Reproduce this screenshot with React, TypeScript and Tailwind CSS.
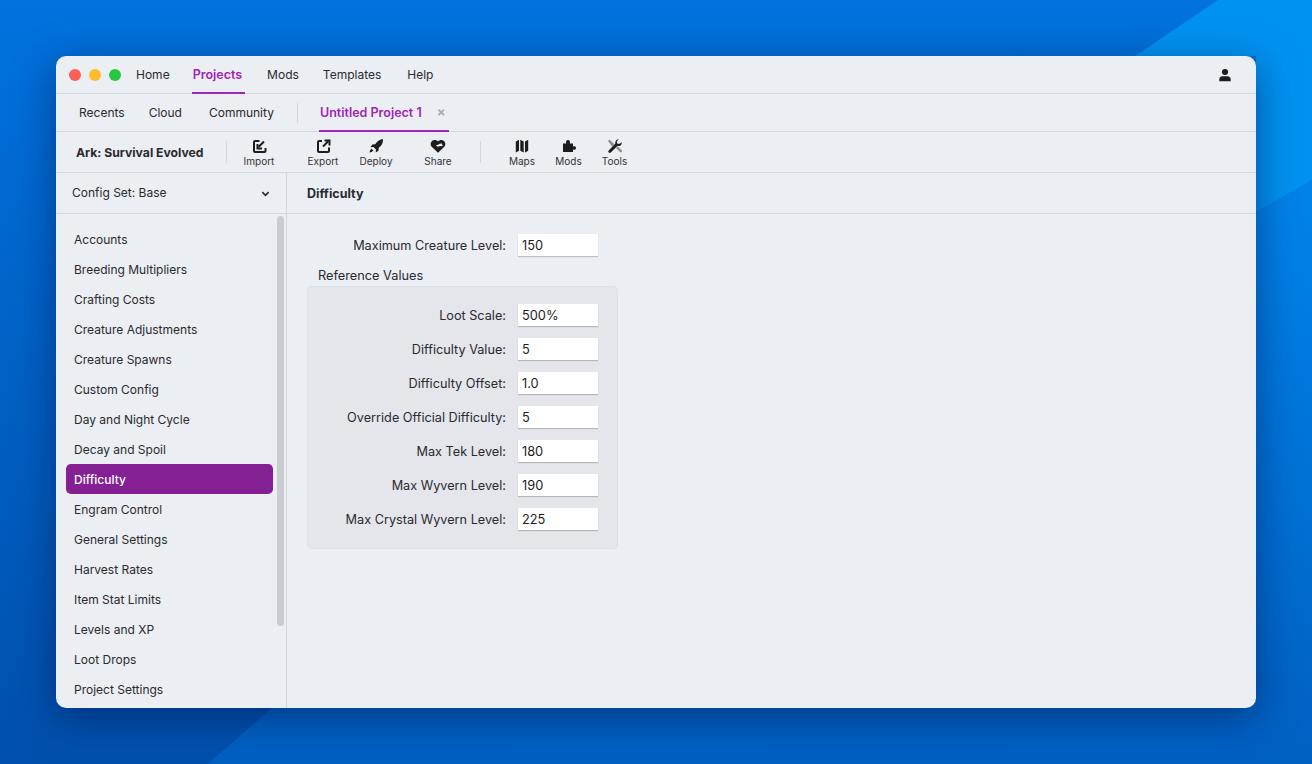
import * as React from 'react'

const sidebarItems = [
  'Accounts',
  'Breeding Multipliers',
  'Crafting Costs',
  'Creature Adjustments',
  'Creature Spawns',
  'Custom Config',
  'Day and Night Cycle',
  'Decay and Spoil',
  'Difficulty',
  'Engram Control',
  'General Settings',
  'Harvest Rates',
  'Item Stat Limits',
  'Levels and XP',
  'Loot Drops',
  'Project Settings',
]

const referenceValues = [
  ['Loot Scale:', '500%'],
  ['Difficulty Value:', '5'],
  ['Difficulty Offset:', '1.0'],
  ['Override Official Difficulty:', '5'],
  ['Max Tek Level:', '180'],
  ['Max Wyvern Level:', '190'],
  ['Max Crystal Wyvern Level:', '225'],
]

function Icon({ children }: { children: React.ReactNode }) {
  return (
    <svg viewBox="0 0 16 16" className="h-4 w-4 text-[#1d1d20]" fill="currentColor">
      {children}
    </svg>
  )
}

const ImportIcon = () => (
  <Icon>
    <g fill="none" stroke="currentColor" strokeWidth="2">
      <path d="M8.500 3H4a1 1 0 0 0-1 1v9a1 1 0 0 0 1 1h9.500a1 1 0 0 0 1-1v-3" />
      <path d="M13 3.500 7.500 9" />
      <path d="M6.500 6v4.500H11" />
    </g>
  </Icon>
)

const ExportIcon = () => (
  <Icon>
    <g fill="none" stroke="currentColor" strokeWidth="2">
      <path d="M7 3H4a1 1 0 0 0-1 1v9a1 1 0 0 0 1 1h9a1 1 0 0 0 1-1V9.500" />
      <path d="M8 8.500 13.500 3" />
      <path d="M9.500 2.500H14.500v5" />
    </g>
  </Icon>
)

const DeployIcon = () => (
  <Icon>
    <path d="M15 1c.2 3.700-1.100 6.500-4.200 8.800l-.3 3-2.800 1.700.3-3-2.500-2.500-3 .3 1.700-2.800 3-.3C9.500 3 12 1.300 15 1z" />
    <path d="M3.500 10.700l1.800 1.800c-.7 1.100-2.100 1.800-3.800 2 .2-1.700.9-3.100 2-3.800z" />
  </Icon>
)

const ShareIcon = () => (
  <Icon>
    <path
      fillRule="evenodd"
      d="M8 14.800 1.700 8.700C-.3 6.700.6 2.600 4.200 2.100 5.700 1.900 7 2.500 8 3.500c1-1 2.300-1.600 3.800-1.400 3.600.5 4.500 4.600 2.500 6.600zM11.800 5.500c-1.200-.3-2.400.1-3.100 1L6 7.300l1.500 1.500 2.800-.8 2.400.2z"
    />
  </Icon>
)

const MapsIcon = () => (
  <Icon>
    <path d="M1.800 3.500 5 1.800v11l-3.200 1.700zM6.300 1.800l3.400 1.700v11l-3.400-1.700zM11 3.500l3.200-1.700v11L11 14.500z" />
  </Icon>
)

const ModsIcon = () => (
  <Icon>
    <path d="M2 5.500h3.200C4.600 3.600 5.300 2 7 2s2.400 1.600 1.800 3.500H12v3c1.500-.6 3-.1 3 1.500s-1.500 2.100-3 1.500V14H2z" />
  </Icon>
)

const ToolsIcon = () => (
  <Icon>
    <path fill="#8b8d92" d="M2.300 1.500 7.200 6 6 7.800 5 8.500 1 3z" />
    <path fill="#8b8d92" d="M9 10l1.700-1.700 4 4c.5.500.5 1.200 0 1.700s-1.200.5-1.700 0z" />
    <path d="M14.700 4.300c.4 1.800-.8 3.700-2.800 3.700-.5 0-.9-.1-1.300-.2l-6.800 6.700c-.6.600-1.600.6-2.100 0s-.6-1.500 0-2.100l6.700-6.800C7.900 3.500 9.600 1.100 11.800 1.300l-2 2.200.4 2 2 .5z" />
  </Icon>
)

const tools = [
  { label: 'Import', icon: <ImportIcon />, width: 'w-[62px]' },
  { label: 'Export', icon: <ExportIcon />, width: 'w-[66px]' },
  { label: 'Deploy', icon: <DeployIcon />, width: 'w-[40px]' },
  { label: 'Share', icon: <ShareIcon />, width: 'w-[84px]' },
]

const tools2 = [
  { label: 'Maps', icon: <MapsIcon />, width: 'w-[46px]' },
  { label: 'Mods', icon: <ModsIcon />, width: 'w-[47px]' },
  { label: 'Tools', icon: <ToolsIcon />, width: 'w-[45px]' },
]

function ToolButton({ label, icon, width }: { label: string; icon: React.ReactNode; width: string }) {
  return (
    <div className={`flex h-[36px] flex-col items-center pt-[4px] ${width}`}>
      {icon}
      <span className="-mt-px whitespace-nowrap text-[10px] leading-[16px] text-[#333337]">{label}</span>
    </div>
  )
}

function Field({ label, value }: { label: string; value: string }) {
  return (
    <div className="flex h-[22px] items-center justify-end">
      <span className="mr-3 whitespace-nowrap pt-px text-[12.7px] text-[#2a2a2e]">{label}</span>
      <div className="flex h-[22px] w-20 items-center bg-white pl-1 pt-px text-[12.8px] text-[#1d1d20] shadow-[0_1px_1px_rgba(0,0,0,0.2)]">
        {value}
      </div>
    </div>
  )
}

export default function App() {
  return (
    <div className="relative flex h-[764px] w-[1312px] overflow-hidden bg-gradient-to-b from-[#0172de] to-[#0050ac] p-14 font-['Inter',sans-serif] antialiased">
      <svg viewBox="0 0 1312 764" className="absolute inset-0 h-full w-full">
        <defs>
          <linearGradient id="lower" x1="0" y1="180" x2="0" y2="764" gradientUnits="userSpaceOnUse">
            <stop offset="0" stopColor="#0084ea" />
            <stop offset="1" stopColor="#0060c2" />
          </linearGradient>
        </defs>
        <path d="M1312 180 L1256 212 C900 400 500 500 272 708 L208 764 L1312 764 Z" fill="url(#lower)" />
        <polygon points="1218,0 1312,0 1312,180 1256,212 1256,56 1135,56" fill="#0092f0" />
      </svg>
      <div className="relative flex h-[652px] w-[1200px] flex-col overflow-hidden rounded-[10px] bg-[#ebeef3] shadow-[0_10px_40px_rgba(0,15,70,0.5)]">
        {/* top nav */}
        <div className="flex h-[38px] shrink-0 items-center border-b border-[#d3d6db] pl-[13px] pr-[24px] text-[12px] text-[#2a2a2e]">
          <div className="flex items-center gap-2">
            <span className="h-3 w-3 rounded-full bg-[#fe5f57]" />
            <span className="h-3 w-3 rounded-full bg-[#febb2e]" />
            <span className="h-3 w-3 rounded-full bg-[#28c73f]" />
          </div>
          <span className="ml-[15px]">Home</span>
          <span className="relative ml-[23px] flex h-full items-center pt-[2px] text-[12.5px] font-semibold text-[#a024b4]">
            Projects
            <span className="absolute -bottom-px -left-[1px] -right-[3px] h-[2px] bg-[#a024b4]" />
          </span>
          <span className="ml-[25px]">Mods</span>
          <span className="ml-[24px]">Templates</span>
          <span className="ml-[26px]">Help</span>
          <svg viewBox="0 0 16 16" className="ml-auto h-[14px] w-[14px] text-[#1d1d20]" fill="currentColor">
            <circle cx="8" cy="4.500" r="3.500" />
            <path d="M1.500 15v-2c0-2 1.500-3.500 3.500-3.500h6c2 0 3.500 1.500 3.500 3.500v2z" />
          </svg>
        </div>

        {/* tabs */}
        <div className="flex h-[38px] shrink-0 items-center border-b border-[#d3d6db] pl-[23px] text-[12px] text-[#2a2a2e]">
          <span>Recents</span>
          <span className="ml-[24px]">Cloud</span>
          <span className="ml-[27px]">Community</span>
          <span className="ml-[23px] h-[20px] w-px bg-[#d3d6db]" />
          <span className="relative ml-[22px] flex h-full items-center pt-[2px] text-[12.5px] font-semibold text-[#a024b4]">
            Untitled Project 1
            <span className="absolute -bottom-px -left-[1px] -right-[27px] h-[2px] bg-[#a024b4]" />
          </span>
          <span className="ml-[15px] text-[13px] font-bold leading-none text-[#a9abb0]">×</span>
        </div>

        {/* toolbar */}
        <div className="flex h-[41px] shrink-0 items-center border-b border-[#d3d6db] pl-5">
          <span className="w-[150px] whitespace-nowrap pt-[2px] text-[12.2px] font-bold text-[#2a2a2e]">
            Ark: Survival Evolved
          </span>
          <span className="h-[22px] w-px bg-[#d3d6db]" />
          <div className="ml-px flex items-center">
            {tools.map((tool) => (
              <ToolButton key={tool.label} {...tool} />
            ))}
          </div>
          <span className="h-[22px] w-px bg-[#d3d6db]" />
          <div className="ml-[18px] flex items-center">
            {tools2.map((tool) => (
              <ToolButton key={tool.label} {...tool} />
            ))}
          </div>
        </div>

        <div className="flex min-h-0 flex-1">
          {/* sidebar */}
          <div className="flex w-[231px] shrink-0 flex-col border-r border-[#d3d6db]">
            <div className="flex h-[41px] shrink-0 items-center justify-between border-b border-[#d3d6db] pl-4 pr-[16px] text-[12px] text-[#2a2a2e]">
              <span>Config Set: Base</span>
              <svg viewBox="0 0 10 10" className="h-[9px] w-[9px]" fill="none" stroke="#2a2a2e" strokeWidth="1.800">
                <path d="M1.500 3.500 5 7l3.500-3.500" />
              </svg>
            </div>
            <div className="relative min-h-0 flex-1 overflow-hidden pl-[10px] pr-[13px] pt-[10px]">
              {sidebarItems.map((item) =>
                item === 'Difficulty' ? (
                  <div
                    key={item}
                    className="flex h-[30px] items-center rounded-[5px] bg-[#852094] pl-2 pt-px text-[12px] font-medium text-white"
                  >
                    {item}
                  </div>
                ) : (
                  <div key={item} className="flex h-[30px] items-center pl-2 pt-px text-[12px] text-[#2a2a2e]">
                    {item}
                  </div>
                ),
              )}
              <div className="absolute right-[2px] top-[2px] h-[410px] w-[7px] rounded-full bg-[#c9ccd1]" />
            </div>
          </div>

          {/* main */}
          <div className="flex min-w-0 flex-1 flex-col">
            <div className="flex h-[41px] shrink-0 items-center border-b border-[#d3d6db] pl-5 pt-[2px] text-[12.5px] font-bold text-[#2a2a2e]">
              Difficulty
            </div>
            <div className="w-[331px] pl-5 pt-5">
              <div className="pr-5">
                <Field label="Maximum Creature Level:" value="150" />
              </div>
              <div className="mt-[12px] pl-[11px] text-[12.75px] leading-[16px] text-[#2a2a2e]">Reference Values</div>
              <div className="mt-[2px] flex h-[263px] flex-col gap-3 rounded-[5px] border border-[#dcdfe4] bg-[#e4e6ec] pr-[19px] pt-[17px]">
                {referenceValues.map(([label, value]) => (
                  <Field key={label} label={label} value={value} />
                ))}
              </div>
            </div>
          </div>
        </div>
      </div>
    </div>
  )
}
